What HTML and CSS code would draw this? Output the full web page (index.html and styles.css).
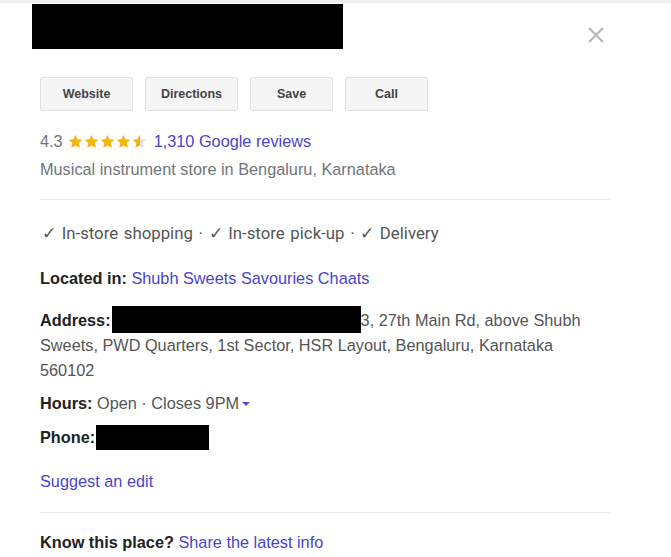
FILE: index.html
```html
<!DOCTYPE html>
<html>
<head>
<meta charset="utf-8">
<link rel="stylesheet" href="styles.css">
</head>
<body>
<div class="topline"></div>
<div class="panel">
  <div class="header">
    <div class="redact title"></div>
    <svg class="close" width="18" height="18" viewBox="0 0 18 18"><path d="M2 2L16 16M16 2L2 16" stroke="#b5b5b5" stroke-width="2" fill="none"/></svg>
  </div>
  <div class="buttons">
    <div class="btn b1">Website</div>
    <div class="btn b2">Directions</div>
    <div class="btn b3">Save</div>
    <div class="btn b4">Call</div>
  </div>
  <div class="rating">
    <span class="score">4.3</span>
    <span class="stars">
      <svg width="80" height="15" viewBox="0 0 80 15">
        <defs>
          <path id="st" d="M7.5 0.8l2 4.5 4.9 0.5-3.7 3.3 1.1 4.8-4.3-2.5-4.3 2.5 1.1-4.8L0.6 5.8l4.9-0.5z"/>
          <linearGradient id="half" x1="0" x2="1" y1="0" y2="0">
            <stop offset="0.52" stop-color="#f5b50f"/>
            <stop offset="0.52" stop-color="#e0e0e0"/>
          </linearGradient>
        </defs>
        <use href="#st" x="0" fill="#f5b50f"/>
        <use href="#st" x="16" fill="#f5b50f"/>
        <use href="#st" x="32" fill="#f5b50f"/>
        <use href="#st" x="48" fill="#f5b50f"/>
        <use href="#st" x="64" fill="url(#half)"/>
      </svg>
    </span>
    <span class="link">1,310 Google reviews</span>
  </div>
  <div class="category">Musical instrument store in Bengaluru, Karnataka</div>
  <div class="divider"></div>
  <div class="attrs">✓ In-store shopping · ✓ In-store pick-up · ✓ Delivery</div>
  <div class="row located"><b>Located in:</b> <span class="link">Shubh Sweets Savouries Chaats</span></div>
  <div class="row address"><b>Address:</b><span class="redact addr"></span>3, 27th Main Rd, above Shubh Sweets, PWD Quarters, 1st Sector, HSR Layout, Bengaluru, Karnataka 560102</div>
  <div class="row hours"><b>Hours:</b> Open · Closes 9PM <span class="caret"></span></div>
  <div class="row phone"><b>Phone:</b><span class="redact ph"></span></div>
  <div class="suggest link">Suggest an edit</div>
  <div class="divider d2"></div>
  <div class="row know"><b>Know this place?</b> <span class="link">Share the latest info</span></div>
</div>
</body>
</html>
```
FILE: styles.css
```css
html, body {
  margin: 0;
  padding: 0;
  background: #fff;
}
body {
  font-family: "Liberation Sans", Arial, sans-serif;
  color: #555;
  width: 671px;
  height: 557px;
  overflow: hidden;
}
.topline {
  height: 3px;
  background: #f0f0f0;
}
.panel {
  padding: 0 61px 0 40px;
}
.header {
  display: flex;
  justify-content: space-between;
  align-items: flex-start;
  margin-left: -8px;
  height: 74px;
}
.redact {
  background: #000;
  display: inline-block;
}
.title {
  width: 311px;
  height: 45px;
  margin-top: 1px;
}
.close {
  margin-top: 23px;
  margin-right: 5px;
}
.buttons {
  display: flex;
  gap: 12px;
}
.btn {
  box-sizing: border-box;
  height: 34px;
  background: #f5f5f5;
  border: 1px solid #e2e2e2;
  border-radius: 2px;
  display: flex;
  align-items: center;
  justify-content: center;
  font-size: 12.5px;
  font-weight: bold;
  color: #444;
}
.b1 { width: 93px; }
.b2 { width: 93px; }
.b3 { width: 83px; }
.b4 { width: 83px; }
.rating {
  margin-top: 20px;
  display: flex;
  align-items: center;
  font-size: 16.3px;
  height: 20px;
}
.score { color: #70757a; }
.stars {
  display: inline-flex;
  margin: 0 6px 0 5px;
}
.link { color: #4a44c8; }
.category {
  margin-top: 8px;
  font-size: 16.3px;
  color: #70757a;
  line-height: 20px;
}
.divider {
  height: 1px;
  background: #e6e6e6;
  margin-top: 20px;
}
.attrs {
  font-family: Roboto, "Liberation Sans", sans-serif;
  font-size: 16.8px;
  color: #555;
  margin-top: 23px;
  line-height: 20px;
  word-spacing: 1.5px;
  padding-left: 2px;
}
.row {
  font-size: 16.3px;
  line-height: 25px;
  color: #555;
}
.row b {
  color: #222;
}
.located { margin-top: 23px; }
.address {
  margin-top: 15px;
  width: 550px;
}
.addr {
  width: 249px;
  height: 27px;
  vertical-align: -7px;
  margin-left: 1px;
}
.hours { margin-top: 8px; }
.caret {
  display: inline-block;
  width: 0;
  height: 0;
  border-left: 4px solid transparent;
  border-right: 4px solid transparent;
  border-top: 4px solid #5a4fd0;
  vertical-align: 3px;
  margin-left: -2px;
}
.phone { margin-top: 9px; }
.ph {
  width: 113px;
  height: 25px;
  vertical-align: -7px;
  margin-left: 1px;
}
.suggest {
  font-size: 16.3px;
  line-height: 20px;
  margin-top: 21px;
}
.d2 { margin-top: 21px; }
.know { margin-top: 17px; }
```
